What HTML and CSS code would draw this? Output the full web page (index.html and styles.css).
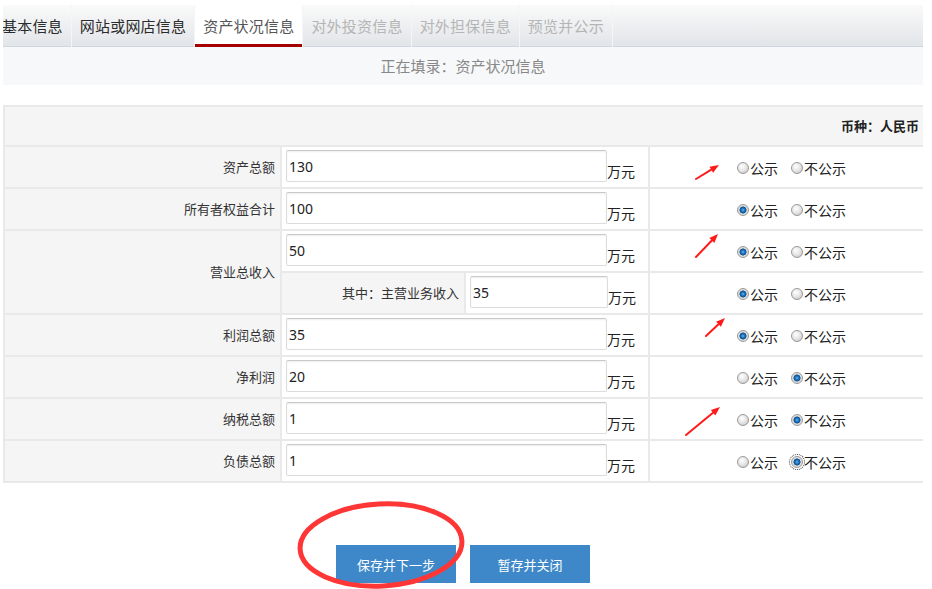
FILE: index.html
```html
<!DOCTYPE html>
<html lang="zh-CN">
<head>
<meta charset="utf-8">
<title>资产状况信息</title>
<link rel="stylesheet" href="styles.css">
</head>
<body>
<div class="page">
  <nav class="tabs">
    <div class="tab-list">
      <a class="tab done">基本信息</a>
      <a class="tab done">网站或网店信息</a>
      <a class="tab active">资产状况信息</a>
      <a class="tab disabled">对外投资信息</a>
      <a class="tab disabled">对外担保信息</a>
      <a class="tab disabled">预览并公示</a>
    </div>
  </nav>
  <div class="filling">正在填录：资产状况信息</div>

  <div class="sheet">
    <div class="cell head">币种：人民币</div>

    <div class="cell label">资产总额</div>
    <div class="cell value"><input class="field" value="130"><span class="unit">万元</span></div>
    <div class="cell opts">
      <label class="opt"><input type="radio" class="radio" name="r1">公示</label>
      <label class="opt"><input type="radio" class="radio" name="r1">不公示</label>
    </div>

    <div class="cell label">所有者权益合计</div>
    <div class="cell value"><input class="field" value="100"><span class="unit">万元</span></div>
    <div class="cell opts">
      <label class="opt"><input type="radio" class="radio" name="r2" checked>公示</label>
      <label class="opt"><input type="radio" class="radio" name="r2">不公示</label>
    </div>

    <div class="cell label tall">营业总收入</div>
    <div class="cell value"><input class="field" value="50"><span class="unit">万元</span></div>
    <div class="cell opts">
      <label class="opt"><input type="radio" class="radio" name="r3" checked>公示</label>
      <label class="opt"><input type="radio" class="radio" name="r3">不公示</label>
    </div>
    <div class="cell split">
      <div class="sublabel">其中：主营业务收入</div>
      <div class="subvalue"><input class="field short" value="35"><span class="unit">万元</span></div>
    </div>
    <div class="cell opts">
      <label class="opt"><input type="radio" class="radio" name="r4" checked>公示</label>
      <label class="opt"><input type="radio" class="radio" name="r4">不公示</label>
    </div>

    <div class="cell label">利润总额</div>
    <div class="cell value"><input class="field" value="35"><span class="unit">万元</span></div>
    <div class="cell opts">
      <label class="opt"><input type="radio" class="radio" name="r5" checked>公示</label>
      <label class="opt"><input type="radio" class="radio" name="r5">不公示</label>
    </div>

    <div class="cell label">净利润</div>
    <div class="cell value"><input class="field" value="20"><span class="unit">万元</span></div>
    <div class="cell opts">
      <label class="opt"><input type="radio" class="radio" name="r6">公示</label>
      <label class="opt"><input type="radio" class="radio" name="r6" checked>不公示</label>
    </div>

    <div class="cell label">纳税总额</div>
    <div class="cell value"><input class="field" value="1"><span class="unit">万元</span></div>
    <div class="cell opts">
      <label class="opt"><input type="radio" class="radio" name="r7">公示</label>
      <label class="opt"><input type="radio" class="radio" name="r7" checked>不公示</label>
    </div>

    <div class="cell label">负债总额</div>
    <div class="cell value"><input class="field" value="1"><span class="unit">万元</span></div>
    <div class="cell opts">
      <label class="opt"><input type="radio" class="radio" name="r8">公示</label>
      <label class="opt"><input type="radio" class="radio focused" name="r8" checked>不公示</label>
    </div>
  </div>

  <div class="actions">
    <button class="btn">保存并下一步</button>
    <button class="btn">暂存并关闭</button>
  </div>
</div>

<svg class="marks" width="932" height="589" viewBox="0 0 932 589">
  <g class="arrow">
    <line x1="696" y1="179" x2="711.3" y2="169.7"/>
    <polygon points="719,165 713.1,172.7 709.5,166.7"/>
    <line x1="696" y1="257" x2="711.8" y2="240.5"/>
    <polygon points="718,234 714.3,242.9 709.3,238.1"/>
    <line x1="706" y1="336" x2="718.5" y2="324.2"/>
    <polygon points="725,318 720.9,326.7 716.1,321.7"/>
    <line x1="686" y1="435" x2="713" y2="412.7"/>
    <polygon points="720,407 715.3,415.4 710.8,410"/>
  </g>
  <ellipse class="ring" cx="381" cy="545" rx="81" ry="41" transform="rotate(-3 381 545)"/>
</svg>
</body>
</html>
```

FILE: styles.css
```css
html, body {
  margin: 0;
  padding: 0;
  background: #fff;
}

body {
  font-family: "Noto Sans CJK SC", "Noto Sans", sans-serif;
  color: #333;
  overflow: hidden;
}

.page {
  width: 920px;
  margin-left: 3px;
  padding-top: 5px;
}

/* ---------- tabs ---------- */
.tabs {
  height: 42px;
  overflow: hidden;
  background: linear-gradient(#fafafa, #e1e4e8);
  box-shadow: inset 0 -1px 0 #cfd6df;
}

.tab-list {
  display: flex;
  height: 42px;
  margin-left: -9px;
}

.tab {
  display: block;
  padding: 0 8px;
  border-right: 1px solid #f4f5f7;
  font-size: 15px;
  letter-spacing: 0.2px;
  line-height: 42px;
  color: #2b2b2b;
  white-space: nowrap;
}

.tab.active {
  background: #fff;
  color: #555;
  box-shadow: inset 0 -3px 0 #a30000;
}

.tab.disabled {
  color: #b5b5b5;
}

.filling {
  height: 38px;
  line-height: 38px;
  background: #f7f8fa;
  color: #888;
  font-size: 15px;
  text-align: center;
  margin-bottom: 20px;
}

/* ---------- sheet ---------- */
.sheet {
  display: grid;
  grid-template-columns: 275px 366px 273px;
  grid-template-rows: 38px;
  grid-auto-rows: 40px;
  gap: 2px;
  padding: 2px 0 2px 2px;
  background: #e9e9e9;
}

.cell {
  background: #fff;
  display: flex;
}

.head {
  grid-column: 1 / -1;
  background: #f5f5f5;
  justify-content: flex-end;
  align-items: center;
  padding-right: 4px;
  font-size: 13px;
  font-weight: bold;
  color: #222;
  line-height: 20px;
}

.label {
  background: #f5f5f5;
  justify-content: flex-end;
  align-items: center;
  padding-right: 5px;
  font-size: 13px;
  line-height: 20px;
}

.label.tall {
  grid-row: span 2;
}

.value {
  align-items: flex-start;
  padding: 3px 0 0 4px;
}

.split {
  align-items: stretch;
}

.sublabel {
  width: 177px;
  flex: none;
  background: #f5f5f5;
  border-right: 2px solid #e9e9e9;
  display: flex;
  justify-content: flex-end;
  align-items: center;
  padding-right: 5px;
  font-size: 13px;
  line-height: 20px;
}

.subvalue {
  display: flex;
  align-items: flex-start;
  padding: 3px 0 0 4px;
}

.field {
  width: 321px;
  height: 32px;
  box-sizing: border-box;
  margin: 0;
  padding: 0 2px;
  border: 1px solid #dcdcdc;
  border-top-color: #c9c9c9;
  border-radius: 2px;
  box-shadow: inset 0 1px 2px rgba(0, 0, 0, 0.07);
  font-family: "Noto Sans", "Noto Sans CJK SC", sans-serif;
  font-size: 14px;
  color: #222;
  background: #fff;
}

.field.short {
  width: 138px;
}

.unit {
  margin-top: 11px;
  font-size: 14px;
  line-height: 20px;
  color: #222;
}

.opts {
  align-items: center;
  padding-left: 87px;
  padding-top: 1px;
}

.opt {
  display: flex;
  align-items: center;
  margin-right: 13px;
  font-size: 14px;
  line-height: 20px;
  color: #222;
}

.radio {
  -webkit-appearance: none;
  appearance: none;
  width: 12px;
  height: 12px;
  margin: 0 1px 0 0;
  box-sizing: border-box;
  border-radius: 50%;
  border: 1px solid #9a9a9a;
  background: radial-gradient(circle at 40% 35%, #ffffff 0, #e4e4e4 50%, #bdbdbd 100%);
}

.radio:checked {
  background: radial-gradient(circle at 50% 50%, #6cb8ee 0, #1f78c4 1.6px, #0f4f8c 3.2px, #d6d6d6 3.8px, #efefef 100%);
}

.radio.focused {
  outline: 1px dotted #333;
  outline-offset: 1px;
}

/* ---------- actions ---------- */
.actions {
  display: flex;
  justify-content: center;
  gap: 14px;
  margin-top: 62px;
}

.btn {
  width: 120px;
  height: 38px;
  border: none;
  background: #3e88c9;
  color: #fff;
  font-family: "Noto Sans CJK SC", sans-serif;
  font-size: 13px;
  padding: 0;
}

/* ---------- annotations ---------- */
.marks {
  position: absolute;
  left: 0;
  top: 0;
  pointer-events: none;
}

.arrow line {
  stroke: #ff1a1a;
  stroke-width: 2;
  stroke-linecap: round;
}

.arrow polygon {
  fill: #ff1a1a;
}

.ring {
  fill: none;
  stroke: #ff3636;
  stroke-width: 5;
}
```
